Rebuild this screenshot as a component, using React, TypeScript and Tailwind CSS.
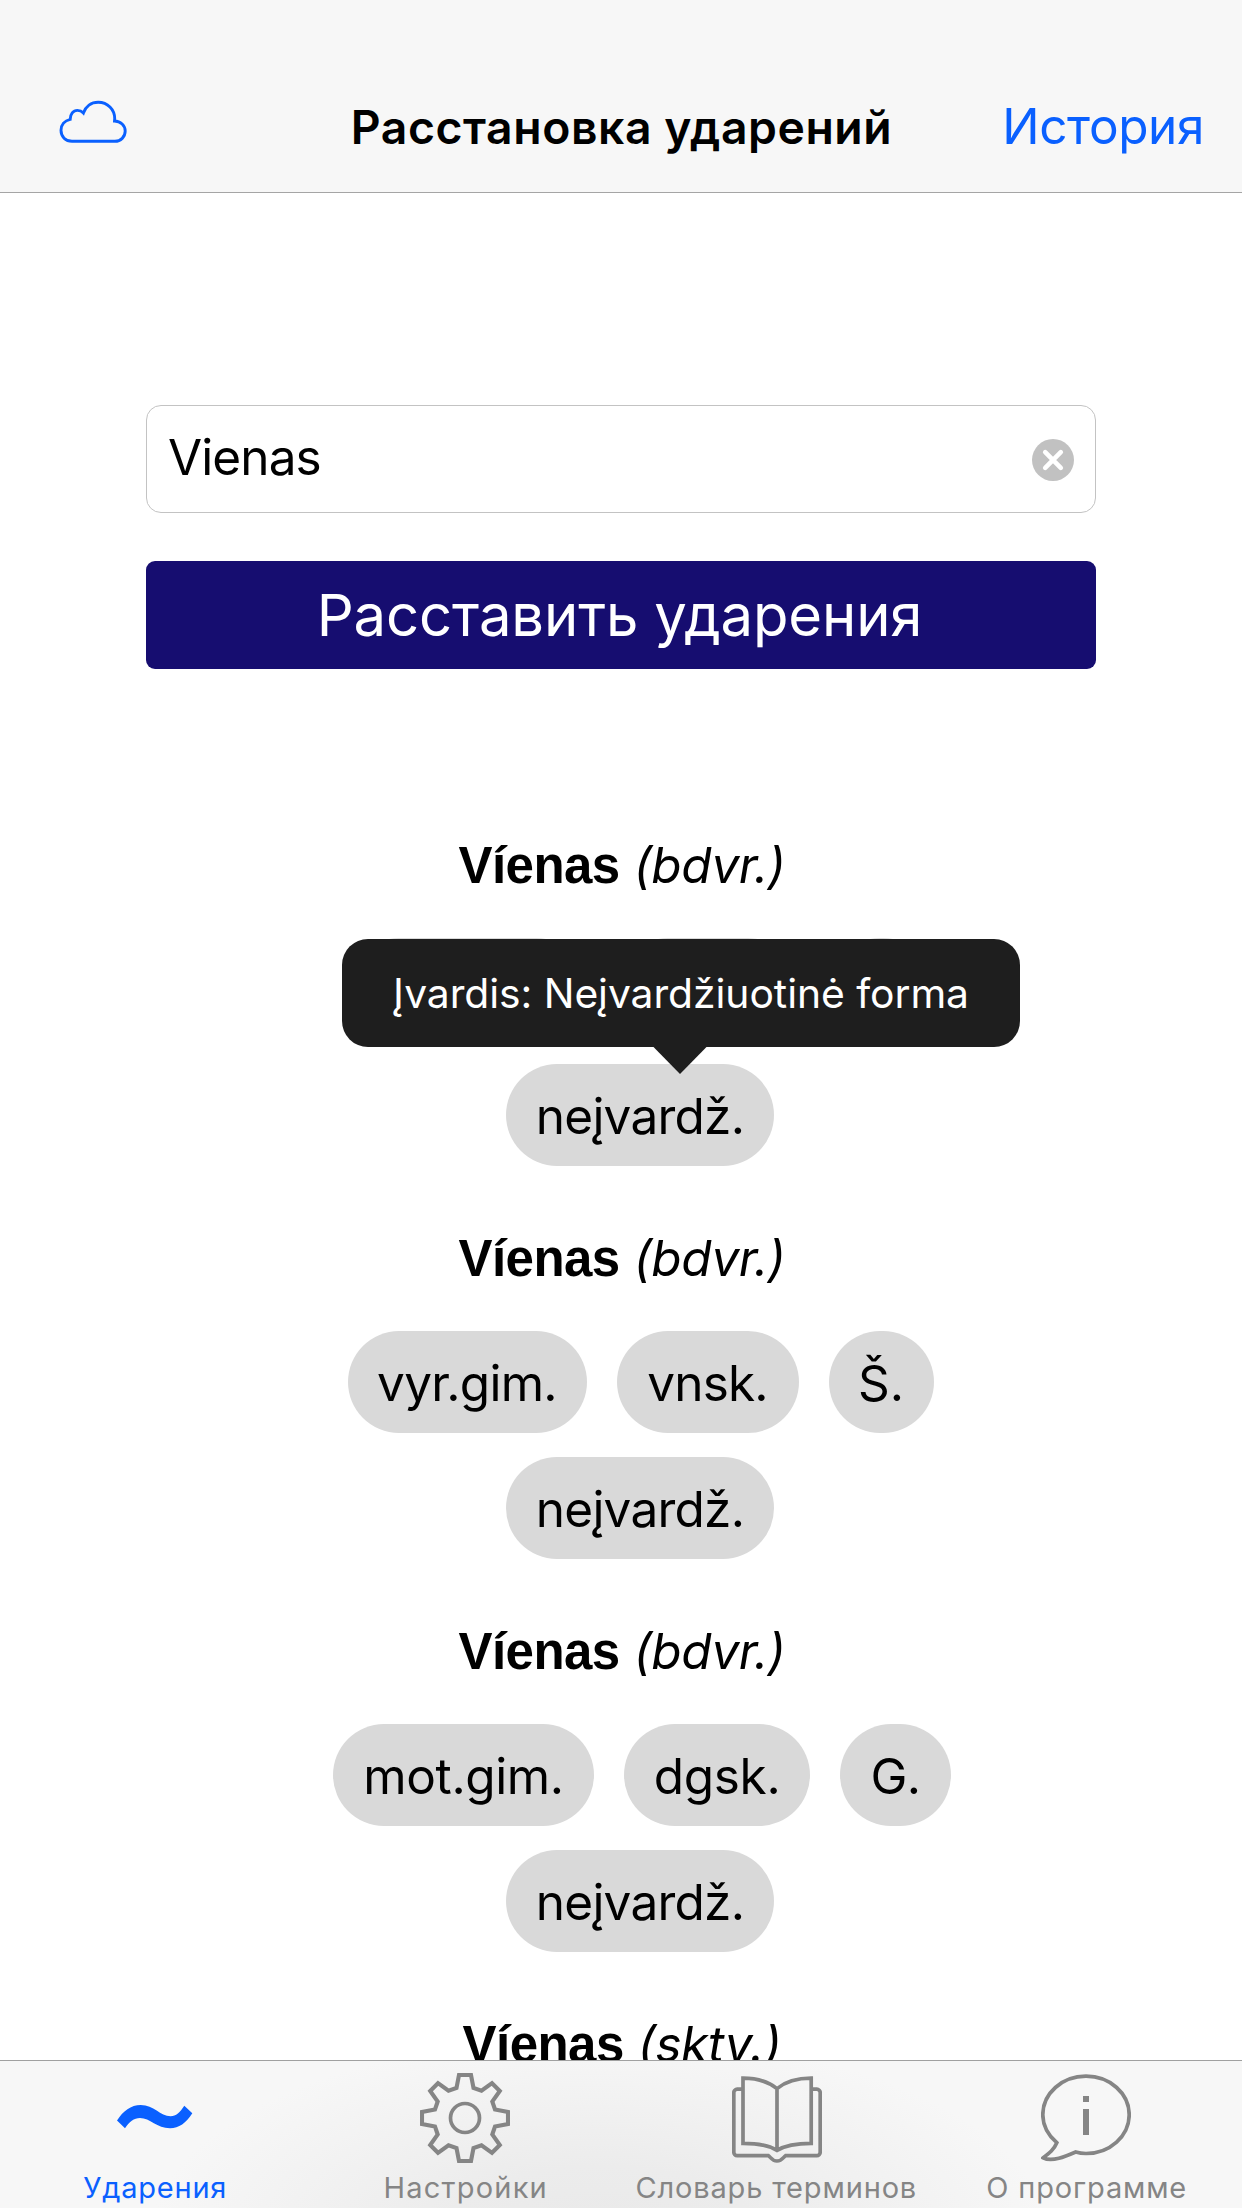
import type { ReactNode } from "react";

type Chip = { label: string; size: string };
type Entry = { word: string; kind: string; first: Chip[]; second: Chip[]; shift: string };

const notPronominal: Chip = { label: "neįvardž.", size: "w-[268px] tracking-[-0.75px]" };

const entries: Entry[] = [
  {
    word: "Víenas",
    kind: "(bdvr.)",
    first: [
      { label: "", size: "w-[239px]" },
      { label: "", size: "w-[182px]" },
      { label: "", size: "w-[105px]" },
    ],
    second: [notPronominal],
    shift: "pl-[39px]",
  },
  {
    word: "Víenas",
    kind: "(bdvr.)",
    first: [
      { label: "vyr.gim.", size: "w-[239px] tracking-[-0.7px]" },
      { label: "vnsk.", size: "w-[182px] tracking-[-0.8px]" },
      { label: "Š.", size: "w-[105px]" },
    ],
    second: [notPronominal],
    shift: "pl-[39px]",
  },
  {
    word: "Víenas",
    kind: "(bdvr.)",
    first: [
      { label: "mot.gim.", size: "w-[261px] tracking-[-0.4px]" },
      { label: "dgsk.", size: "w-[186px] tracking-[-0.3px]" },
      { label: "G.", size: "w-[111px] tracking-[-0.5px]" },
    ],
    second: [notPronominal],
    shift: "pl-[42px]",
  },
  { word: "Víenas", kind: "(sktv.)", first: [], second: [], shift: "pl-[39px]" },
];

function CloudIcon() {
  return (
    <svg width="68" height="43" viewBox="0 0 68 43" fill="none" stroke="#0a60ff" strokeWidth="2.9">
      <path d="M13 41.3C6.5 41.3 2 36.6 2 30.3C2 25 5.6 20.6 11.2 19.3C11.2 14.2 14.2 10.4 18.4 10.4C20.8 10.4 22.8 11.3 24.4 13C26.6 6.5 32.2 2.2 39.2 2.2C48.6 2.2 55.7 9.6 55.7 18.6L55.5 21C61.6 21.2 66.2 25.6 66.2 31.1C66.2 36.9 61.7 41.3 56 41.3Z" />
    </svg>
  );
}

function TildeIcon() {
  return (
    <svg width="90" height="90" viewBox="0 0 90 90" fill="#0a60ff">
      <path d="M7 47.6C13 38 21 32 30.7 32C44 32 50 43.2 60.7 43.2C66 43.2 70 39.4 74.3 32.7L82.3 40.3C76 50 69 55.3 60 55.3C47 55.3 40 45 30 45C24 45 19 49 15 55.3Z" />
    </svg>
  );
}

function GearIcon() {
  return (
    <svg className="mr-[1.5px]" width="90" height="90" viewBox="-45 -45 90 90" fill="none" stroke="#858585" strokeWidth="4.1">
      <path d="M-6-43H6L8.5-30L16.5-27.3L27-34.8L34.8-27L27.3-16.5L30-8.5L43-6V6L30 8.5L27.3 16.5L34.8 27L27 34.8L16.5 27.3L8.5 30L6 43H-6L-8.5 30L-16.5 27.3L-27 34.8L-34.8 27L-27.3 16.5L-30 8.5L-43 6V-6L-30-8.5L-27.3-16.5L-34.8-27L-27-34.8L-16.5-27.3L-8.5-30Z" />
      <circle r="14.5" strokeWidth="3.7" />
    </svg>
  );
}

function BookIcon() {
  return (
    <svg className="ml-[1.5px]" width="90" height="90" viewBox="0 0 90 90" fill="none" stroke="#858585" strokeWidth="3.7">
      <path d="M11 16.2H5.2A3.4 3.4 0 0 0 1.8 19.6V79.3A3.4 3.4 0 0 0 5.2 82.7H36.5C38.5 84 40 88 45 88C50 88 51.5 84 53.5 82.7H84.8A3.4 3.4 0 0 0 88.2 79.3V19.6A3.4 3.4 0 0 0 84.8 16.2H79" />
      <path d="M11 5.2C24 5.2 35 7.5 45 15.6C55 7.5 66 5.2 79.2 5.2V70.3C66 70.3 54 71.8 45 77.3C36 71.8 24 70.3 11 70.3ZM45 15.6V77.3" />
    </svg>
  );
}

function InfoBubbleIcon() {
  return (
    <svg className="mr-[1.5px]" width="90" height="90" viewBox="0 0 90 90" fill="none" stroke="#858585" strokeWidth="3.7">
      <path d="M34.7 79C38 80 42 80.5 45 80.5C69 80.5 88.2 63 88.2 41.7C88.2 20.5 69 3.2 45 3.2C21 3.2 1.8 20.5 1.8 41.7C1.8 53 7.5 62.5 15.8 69.7C13 76.5 8.5 80 2.2 84.8C11 89.5 25.5 83 34.7 79Z" />
      <path d="M42 23H48V29H42ZM42 36H48V62H42Z" fill="#858585" stroke="none" />
    </svg>
  );
}

function ChipRow({ chips, className }: { chips: Chip[]; className: string }) {
  return (
    <div className={`flex justify-center gap-[30px] ${className}`}>
      {chips.map((chip, i) => (
        <div
          key={i}
          className={`flex h-[102px] items-center justify-center rounded-full bg-[#d9d9d9] pt-[2px] text-[49.5px] leading-[60px] whitespace-nowrap ${chip.size}`}
        >
          {chip.label}
        </div>
      ))}
    </div>
  );
}

function Tooltip() {
  return (
    <div className="absolute top-[104px] left-[342px] z-10 flex h-[108px] w-[678px] items-center justify-center rounded-[26px] bg-[#1e1e1e] text-[40.8px] leading-[50px] tracking-[-0.05px] whitespace-nowrap text-white">
      Įvardis: Neįvardžiuotinė forma
      <div className="absolute top-[107.5px] left-[311px] h-[27.5px] w-[54px] bg-[#1e1e1e] [clip-path:polygon(0_0,100%_0,50%_100%)]" />
    </div>
  );
}

function EntryBlock({ entry, open }: { entry: Entry; open: boolean }) {
  return (
    <section className="relative h-[393px] shrink-0">
      <h2 className="flex h-[60px] items-baseline justify-center gap-[14px] pl-[2px] leading-[60px] whitespace-nowrap">
        <span className="font-['Liberation_Sans',Arial,sans-serif] text-[51px] font-bold tracking-[-0.55px]">
          {entry.word}
        </span>
        <span className="text-[49.5px] font-normal tracking-[-0.4px] italic">{entry.kind}</span>
      </h2>
      <ChipRow chips={entry.first} className={`mt-[43px] ${entry.shift}`} />
      <ChipRow chips={entry.second} className="mt-6 pl-[38px]" />
      {open && <Tooltip />}
    </section>
  );
}

function Tab({ icon, label, className }: { icon: ReactNode; label: string; className: string }) {
  return (
    <div className={`flex flex-1 flex-col items-center pt-3 ${className}`}>
      {icon}
      <span className="mt-[6.5px] text-[29px] leading-[36px] whitespace-nowrap">{label}</span>
    </div>
  );
}

export default function App() {
  return (
    <div className="flex h-[2208px] w-[1242px] flex-col overflow-hidden bg-white font-['Inter',sans-serif] text-black">
      <header className="grid h-[193px] shrink-0 grid-cols-[1fr_auto_1fr] items-center border-b border-[#a5a5a5] bg-[#f7f7f7] pt-[60px] leading-[60px] whitespace-nowrap">
        <div className="pb-[9px] pl-[59px]">
          <CloudIcon />
        </div>
        <h1 className="pt-px pl-px text-[46.3px] font-semibold tracking-[0.56px]">Расстановка ударений</h1>
        <div className="pr-[38px] text-right text-[49.5px] tracking-[-0.41px] text-[#0a60ff]">История</div>
      </header>

      <main className="flex flex-1 flex-col overflow-hidden">
        <div className="mx-[146px] mt-[212px] flex h-[108px] shrink-0 items-center justify-between rounded-[15px] border border-[#c3c3c3] px-[21px]">
          <span className="pb-1 text-[49.5px] leading-[60px] tracking-[-0.9px]">Vienas</span>
          <svg className="mt-[2px]" width="42" height="42" viewBox="0 0 42 42">
            <circle cx="21" cy="21" r="21" fill="#c1c1c1" />
            <path d="M13.2 13.2L28.8 28.8M28.8 13.2L13.2 28.8" stroke="#fff" strokeWidth="4.6" strokeLinecap="round" />
          </svg>
        </div>
        <button className="mx-[146px] mt-12 h-[108px] shrink-0 rounded-[9px] bg-[#160d70] pr-[3px] text-[58px] leading-[70px] tracking-[-0.13px] whitespace-nowrap text-white">
          Расставить ударения
        </button>
        <div className="mt-[166px] flex flex-col">
          {entries.map((entry, i) => (
            <EntryBlock key={i} entry={entry} open={i === 0} />
          ))}
        </div>
      </main>

      <nav className="flex h-[148px] shrink-0 border-t border-[#a0a0a0] bg-[#f7f7f7] bg-[radial-gradient(ellipse_450px_200px_at_600px_175px,#e9e9e9_0%,#ececec_35%,#f2f2f2_70%,#f7f7f7_100%)] text-[#858585]">
        <Tab icon={<TildeIcon />} label="Ударения" className="tracking-[0.76px] text-[#0a60ff]" />
        <Tab icon={<GearIcon />} label="Настройки" className="tracking-[1.2px]" />
        <Tab icon={<BookIcon />} label="Словарь терминов" className="tracking-[0.85px]" />
        <Tab icon={<InfoBubbleIcon />} label="О программе" className="tracking-[0.84px]" />
      </nav>
    </div>
  );
}
